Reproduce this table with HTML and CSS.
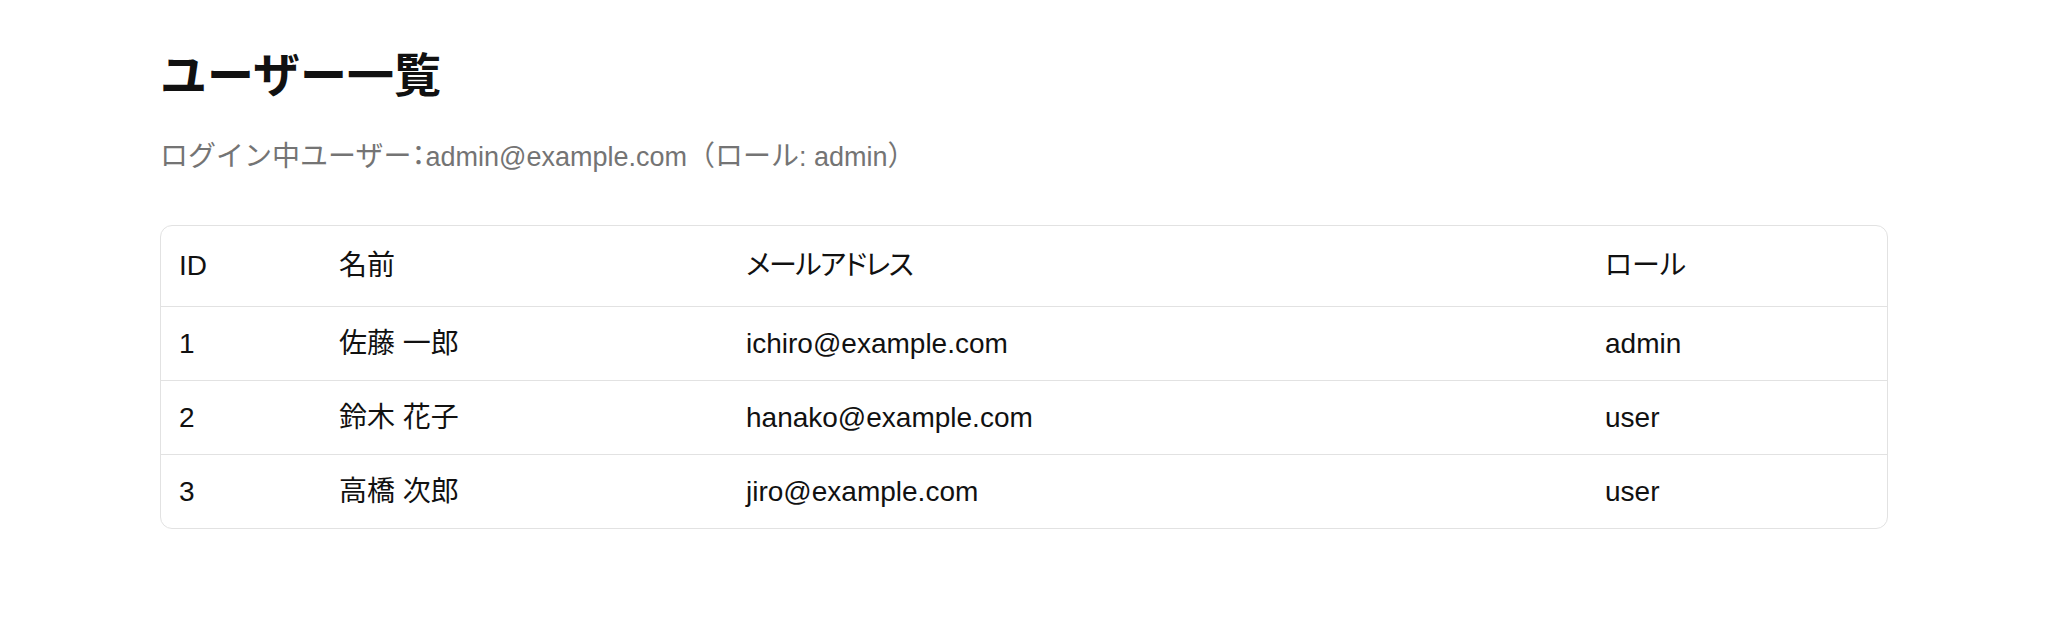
FILE: index.html
```html
<!DOCTYPE html>
<html lang="ja">
<head>
<meta charset="utf-8">
<title>ユーザー一覧</title>
<link rel="stylesheet" href="styles.css">
</head>
<body>
<main class="page">
  <h1 class="title">ユーザー一覧</h1>
  <p class="login-info">ログイン中ユーザー<span class="punct">：</span><span class="latin">admin@example.com</span>（ロール<span class="latin">: admin</span>）</p>
  <div class="table-wrap">
    <table class="users">
      <colgroup>
        <col class="c-id"><col class="c-name"><col class="c-mail"><col class="c-role">
      </colgroup>
      <thead>
        <tr><th>ID</th><th>名前</th><th class="kana">メールアドレス</th><th>ロール</th></tr>
      </thead>
      <tbody>
        <tr><td>1</td><td>佐藤 一郎</td><td>ichiro@example.com</td><td>admin</td></tr>
        <tr><td>2</td><td>鈴木 花子</td><td>hanako@example.com</td><td>user</td></tr>
        <tr><td>3</td><td>高橋 次郎</td><td>jiro@example.com</td><td>user</td></tr>
      </tbody>
    </table>
  </div>
</main>
</body>
</html>
```
FILE: styles.css
```css
html, body {
  margin: 0;
  padding: 0;
  background: #ffffff;
}
body {
  font-family: "Liberation Sans", "Noto Sans CJK JP", sans-serif;
  color: #111111;
}
.page {
  width: 1728px;
  margin: 0 auto;
  padding-top: 40px;
}
.title {
  margin: 0;
  font-family: "Noto Sans CJK JP", sans-serif;
  font-size: 47px;
  line-height: 64px;
  font-weight: 700;
  color: #111111;
}
.login-info {
  margin: 32px 0 0;
  height: 36px;
  font-family: "Noto Sans CJK JP", sans-serif;
  font-size: 28px;
  line-height: 36px;
  color: #747474;
}
.login-info .latin {
  font-family: "Liberation Sans", sans-serif;
  font-size: 27px;
  line-height: 1;
}
.punct {
  font-feature-settings: "halt";
}
.table-wrap {
  margin-top: 53px;
  border: 1px solid #e2e2e2;
  border-radius: 12px;
  overflow: hidden;
}
.users {
  width: 100%;
  border-collapse: collapse;
  table-layout: fixed;
}
.c-id { width: 160px; }
.c-name { width: 407px; }
.c-mail { width: 859px; }
.users th, .users td {
  text-align: left;
  font-weight: 400;
  font-size: 28px;
  line-height: 36px;
  padding: 0 18px;
  color: #111111;
  font-feature-settings: "palt";
}
.users th.kana {
  letter-spacing: -1.4px;
}
.users th {
  height: 80px;
}
.users td {
  height: 73px;
  border-top: 1px solid #e2e2e2;
}
```
